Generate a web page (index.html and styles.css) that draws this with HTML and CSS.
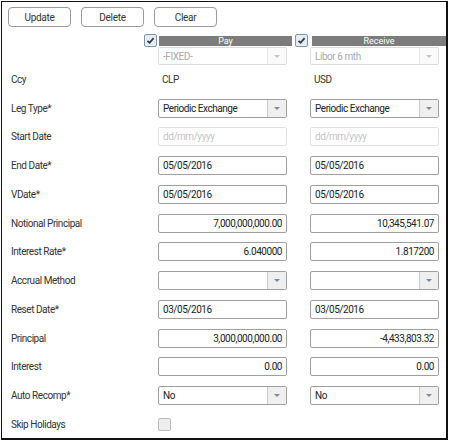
FILE: index.html
```html
<!DOCTYPE html>
<html>
<head>
<meta charset="utf-8">
<link rel="stylesheet" href="styles.css">
</head>
<body>
<div class="panel">
  <div class="toolbar">
    <button class="btn">Update</button>
    <button class="btn">Delete</button>
    <button class="btn">Clear</button>
  </div>
  <div class="legs-head">
    <span class="check checked"><svg viewBox="0 0 13 13" width="13" height="13"><path d="M3.5 6.8 L5.6 8.8 L9.6 4.2" fill="none" stroke="#2f3b48" stroke-width="1.8"/></svg></span>
    <div class="bar bar-pay">Pay</div>
    <span class="check checked"><svg viewBox="0 0 13 13" width="13" height="13"><path d="M3.5 6.8 L5.6 8.8 L9.6 4.2" fill="none" stroke="#2f3b48" stroke-width="1.8"/></svg></span>
    <div class="bar bar-rec">Receive</div>
  </div>
  <div class="index-row">
    <div class="sel disabled"><span class="val">-FIXED-</span><span class="arrow"><i></i></span></div>
    <div class="sel disabled"><span class="val">Libor 6 mth</span><span class="arrow"><i></i></span></div>
  </div>
  <div class="grid">
    <div class="lbl">Ccy</div><div class="cell"><span class="plain">CLP</span></div><div class="cell"><span class="plain">USD</span></div>

    <div class="lbl">Leg Type*</div>
    <div class="cell"><div class="sel"><span class="val">Periodic Exchange</span><span class="arrow"><i></i></span></div></div>
    <div class="cell"><div class="sel"><span class="val">Periodic Exchange</span><span class="arrow"><i></i></span></div></div>

    <div class="lbl">Start Date</div>
    <div class="cell"><div class="inp disabled ph">dd/mm/yyyy</div></div>
    <div class="cell"><div class="inp disabled ph">dd/mm/yyyy</div></div>

    <div class="lbl">End Date*</div>
    <div class="cell"><div class="inp">05/05/2016</div></div>
    <div class="cell"><div class="inp">05/05/2016</div></div>

    <div class="lbl">VDate*</div>
    <div class="cell"><div class="inp">05/05/2016</div></div>
    <div class="cell"><div class="inp">05/05/2016</div></div>

    <div class="lbl">Notional Principal</div>
    <div class="cell"><div class="inp num">7,000,000,000.00</div></div>
    <div class="cell"><div class="inp num">10,345,541.07</div></div>

    <div class="lbl">Interest Rate*</div>
    <div class="cell"><div class="inp num">6.040000</div></div>
    <div class="cell"><div class="inp num">1.817200</div></div>

    <div class="lbl">Accrual Method</div>
    <div class="cell"><div class="sel"><span class="val"></span><span class="arrow"><i></i></span></div></div>
    <div class="cell"><div class="sel"><span class="val"></span><span class="arrow"><i></i></span></div></div>

    <div class="lbl">Reset Date*</div>
    <div class="cell"><div class="inp">03/05/2016</div></div>
    <div class="cell"><div class="inp">03/05/2016</div></div>

    <div class="lbl">Principal</div>
    <div class="cell"><div class="inp num">3,000,000,000.00</div></div>
    <div class="cell"><div class="inp num">-4,433,803.32</div></div>

    <div class="lbl">Interest</div>
    <div class="cell"><div class="inp num">0.00</div></div>
    <div class="cell"><div class="inp num">0.00</div></div>

    <div class="lbl">Auto Recomp*</div>
    <div class="cell"><div class="sel"><span class="val">No</span><span class="arrow"><i></i></span></div></div>
    <div class="cell"><div class="sel"><span class="val">No</span><span class="arrow"><i></i></span></div></div>

    <div class="lbl">Skip Holidays</div>
    <div class="cell"><span class="check empty"></span></div>
    <div class="cell"></div>
  </div>
</div>
</body>
</html>
```
FILE: styles.css
```css
html, body {
  margin: 0;
  padding: 0;
  background: #fff;
}
body {
  font-family: Roboto, "Liberation Sans", Arial, sans-serif;
  font-size: 10px;
  letter-spacing: -0.45px;
  color: #333;
}
.panel {
  margin: 1px 0 0 1px;
  width: 444px;
  height: 436px;
  border: 1px solid #111;
  border-right-width: 2px;
  border-bottom-width: 2px;
  box-sizing: content-box;
}
.toolbar {
  display: flex;
  gap: 10px;
  padding: 5px 0 0 6px;
}
.btn {
  width: 63px;
  height: 20px;
  border: 1px solid #9a9a9a;
  border-radius: 4px;
  background: #fff;
  font-family: inherit;
  font-size: 10px;
  letter-spacing: -0.3px;
  color: #333;
  padding: 0;
}
.legs-head {
  display: flex;
  align-items: center;
  margin-top: 7px;
  padding-left: 142px;
  height: 13px;
}
.check {
  display: block;
  width: 13px;
  height: 13px;
  box-sizing: border-box;
  border-radius: 2px;
  flex: none;
}
.check svg { display: block; margin: -1px; }
.checked {
  border: 1px solid #7f97ae;
  background: #e6ecf2;
}
.empty {
  border: 1px solid #bbb;
  background: #eee;
}
.bar {
  height: 10px;
  line-height: 10px;
  background: #7c7c7c;
  color: #fff;
  text-align: center;
  font-size: 9px;
  letter-spacing: 0;
}
.bar-pay {
  width: 133px;
  margin-left: 2px;
  margin-right: 3px;
}
.bar-rec {
  flex: 1;
  margin-left: 4px;
}
.index-row {
  display: flex;
  padding-left: 156px;
  gap: 23px;
  height: 18px;
}
.index-row .sel { height: 18px; }
.grid {
  display: grid;
  grid-template-columns: 156px 152px 1fr;
  grid-auto-rows: 28.75px;
  align-items: center;
}
.lbl {
  padding-left: 9px;
}
.cell {
  display: flex;
  align-items: center;
}
.plain { padding-left: 4px; }
.sel, .inp {
  width: 129px;
  height: 19px;
  box-sizing: border-box;
  border: 1px solid #a0a0a0;
  border-radius: 2px;
  background: #fff;
  display: flex;
  align-items: center;
  color: #222;
}
.sel .val {
  flex: 1;
  padding-left: 4px;
  white-space: nowrap;
  overflow: hidden;
}
.sel .arrow {
  width: 18px;
  align-self: stretch;
  background: #efefef;
  border-left: 1px solid #c8c8c8;
  display: flex;
  align-items: center;
  justify-content: center;
}
.sel .arrow i {
  display: block;
  width: 0;
  height: 0;
  border-left: 3px solid transparent;
  border-right: 3px solid transparent;
  border-top: 3px solid #7a8a99;
}
.sel.disabled {
  border-color: #dcdcdc;
  color: #aaa;
}
.sel.disabled .arrow {
  background: #fafafa;
  border-left-color: #e4e4e4;
}
.sel.disabled .arrow i { border-top-color: #c4c4c4; }
.inp {
  padding: 0 4px;
}
.inp.num {
  justify-content: flex-end;
}
.inp.disabled {
  border-color: #e0e0e0;
}
.inp.ph { color: #c4c4c4; }
```
